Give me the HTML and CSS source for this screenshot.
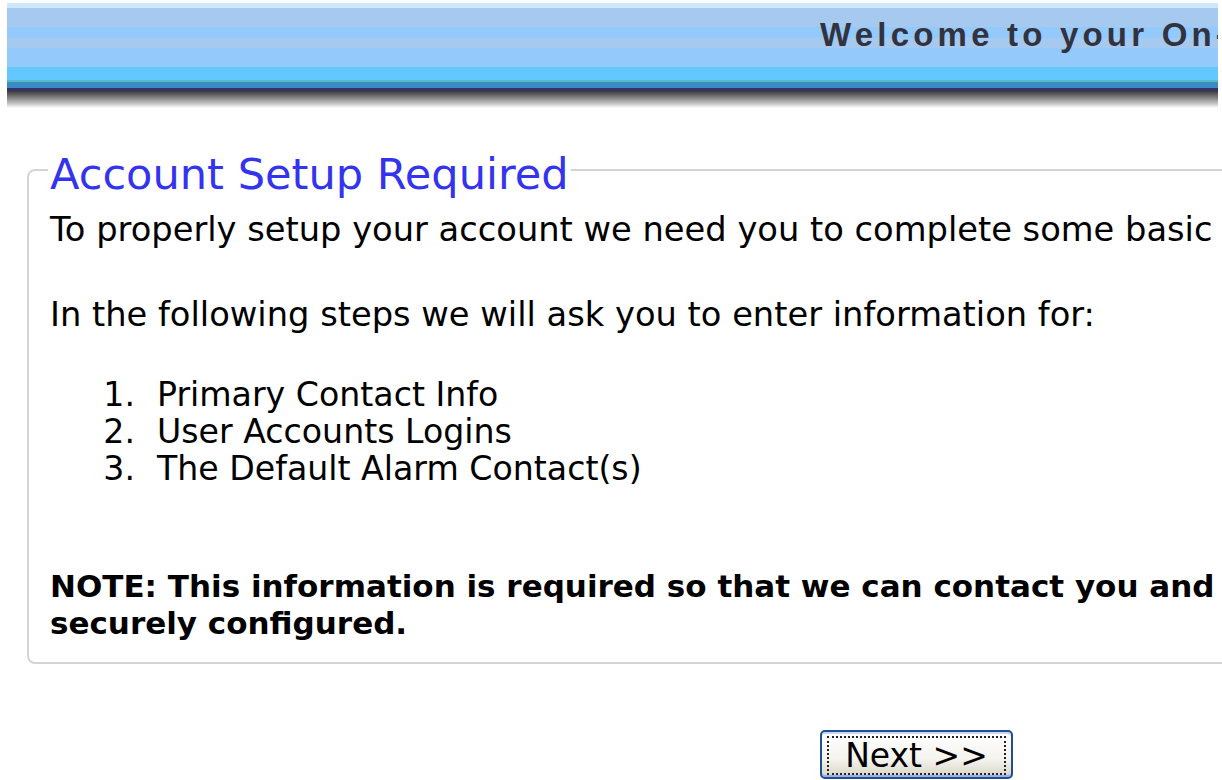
FILE: index.html
```html
<!DOCTYPE html>
<html>
<head>
<meta charset="utf-8">
<title>Account Setup</title>
<link rel="stylesheet" href="styles.css">
</head>
<body>
<div class="page">
  <header class="banner">
    <div class="banner-bands">
      <h1 class="banner-title">Welcome to your On-line Account</h1>
    </div>
    <div class="banner-shadow"></div>
  </header>

  <fieldset class="setup">
    <legend class="setup-title">Account Setup Required</legend>
    <p class="intro">To properly setup your account we need you to complete some basic</p>
    <p class="intro spaced">In the following steps we will ask you to enter information for:</p>
    <ol class="steps">
      <li>Primary Contact Info</li>
      <li>User Accounts Logins</li>
      <li>The Default Alarm Contact(s)</li>
    </ol>
    <p class="note">NOTE: This information is required so that we can contact you and<br>securely configured.</p>
  </fieldset>

  <div class="actions">
    <button class="next-btn" type="button"><span class="focus">Next &gt;&gt;</span></button>
  </div>
</div>
</body>
</html>
```

FILE: styles.css
```css
html, body {
  margin: 0;
  padding: 0;
  background: #ffffff;
  overflow: hidden;
}

.page {
  width: 1222px;
  height: 780px;
  padding: 3px 0 0 7px;
  box-sizing: border-box;
  overflow: hidden;
  font-family: "DejaVu Sans", Verdana, sans-serif;
}

/* Top banner: stacked colour bands and a soft drop shadow */
.banner {
  width: 1211px;
}

.banner-bands {
  height: 88px;
  overflow: hidden;
  background: linear-gradient(to bottom,
    #cde8fb 0, #cde8fb 5px,
    #a6c9ef 5px, #a6c9ef 24px,
    #94c9fb 24px, #94c9fb 35px,
    #a6c9ef 35px, #a6c9ef 45px,
    #94c9fb 45px, #94c9fb 64px,
    #62c8fe 64px, #62c8fe 77px,
    #5cb9c4 77px, #5cb9c4 79px,
    #3a8ac6 79px, #3a8ac6 85px,
    #33336a 85px, #33336a 88px);
}

.banner-title {
  margin: 0;
  padding: 14px 0 0 813px;
  white-space: nowrap;
  font-family: "Liberation Sans", Arial, sans-serif;
  font-weight: bold;
  font-size: 33px;
  line-height: 36px;
  letter-spacing: 4.2px;
  color: #33333f;
}

.banner-shadow {
  height: 17px;
  background: linear-gradient(to bottom, #3c3c3c 0, #7a7a7a 35%, #c8c8c8 75%, #ffffff 100%);
}

/* Setup box */
.setup {
  width: 1260px;
  margin: 33px 0 0 20px;
  padding: 12px 0 20px 21px;
  border: 2px solid #d4d4d4;
  border-radius: 8px;
  box-sizing: border-box;
  color: #000000;
}

.setup-title {
  margin-left: -2px;
  padding: 8px 2px 0 2px;
  font-size: 43.1px;
  line-height: 50px;
  color: #3434ee;
}

.intro {
  margin: 0;
  font-size: 33.7px;
  line-height: 37px;
  white-space: nowrap;
}

.intro.spaced {
  margin-top: 48px;
}

/* Numbered steps with right-aligned numbers and a wide gutter */
.steps {
  margin: 43px 0 0 0;
  padding: 0;
  list-style: none;
  counter-reset: step;
  font-size: 33.2px;
  line-height: 37px;
}

.steps li {
  counter-increment: step;
  white-space: nowrap;
}

.steps li::before {
  content: counter(step) ".";
  display: inline-block;
  width: 107px;
  padding-right: 22px;
  box-sizing: border-box;
  text-align: right;
}

.note {
  margin: 81px 0 0 0;
  font-weight: bold;
  font-size: 31px;
  line-height: 37px;
  white-space: nowrap;
}

/* Next button, XP-style with a focus rectangle */
.actions {
  padding: 66px 0 0 813px;
}

.next-btn {
  width: 193px;
  height: 49px;
  padding: 4px 5px 2px 5px;
  border: 2px solid #1f4f8f;
  border-radius: 5px;
  background: linear-gradient(to bottom, #ffffff 0, #f4f3ee 60%, #d8d4c6 100%);
  box-shadow: inset 0 2px 0 #c8d4f8, inset 0 -2px 0 #9ab0ee;
  cursor: pointer;
}

.focus {
  display: block;
  height: 100%;
  box-sizing: border-box;
  border: 2px dotted #222;
  font-family: "DejaVu Sans", Tahoma, sans-serif;
  font-size: 33px;
  line-height: 36px;
  color: #000;
}
```
